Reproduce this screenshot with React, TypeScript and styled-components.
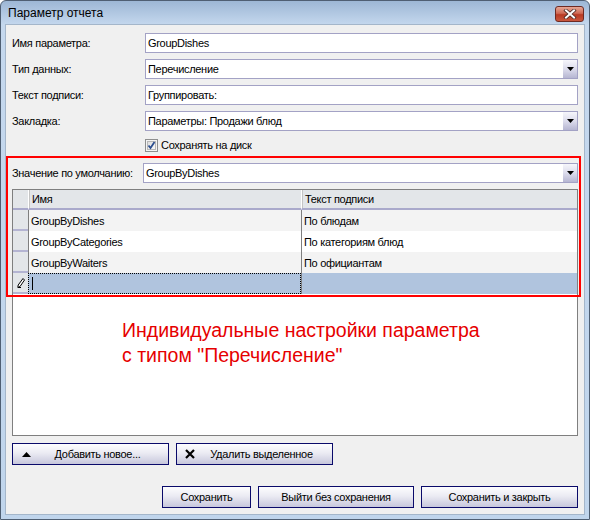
import React from 'react';
import styled, {createGlobalStyle} from 'styled-components';

const GlobalStyle = createGlobalStyle`
    body {
        margin: 0;
        font-family: "Liberation Sans", Arial, sans-serif;
        font-size: 11px;
        letter-spacing: -0.3px;
        color: #000;
    }
`

const rows = [
    {name: 'GroupByDishes', caption: 'По блюдам', bg: '#f3f3f3'},
    {name: 'GroupByCategories', caption: 'По категориям блюд', bg: '#ffffff'},
    {name: 'GroupByWaiters', caption: 'По официантам', bg: '#f3f3f3'},
];

const Arrow = () => (
    <ArrowButton>
        <svg width="7" height="4" viewBox="0 0 7 4">
            <path d="M0 0H7L3.5 4Z" fill="#000"/>
        </svg>
    </ArrowButton>
);

export default function App() {
    return (
        <>
            <GlobalStyle/>
            <Window>
                <TitleBar>
                    <Title>Параметр отчета</Title>
                    <CloseButton>
                        <svg width="14" height="10" viewBox="0 0 14 10">
                            <path d="M3 1.5L11 8.5M11 1.5L3 8.5" stroke="#4a2a26" strokeWidth="3.6"
                                  strokeLinecap="square"/>
                            <path d="M3 1.5L11 8.5M11 1.5L3 8.5" stroke="#fff" strokeWidth="2"
                                  strokeLinecap="square"/>
                        </svg>
                    </CloseButton>
                </TitleBar>
                <Client>
                    <Form>
                        <Label>Имя параметра:</Label>
                        <Field>GroupDishes</Field>
                        <Label>Тип данных:</Label>
                        <Field>Перечисление<Arrow/></Field>
                        <Label>Текст подписи:</Label>
                        <Field>Группировать:</Field>
                        <Label>Закладка:</Label>
                        <Field>Параметры: Продажи блюд<Arrow/></Field>
                    </Form>
                    <CheckRow>
                        <svg width="13" height="13" viewBox="0 0 13 13">
                            <defs>
                                <linearGradient id="cb" x1="0" y1="0" x2="1" y2="1">
                                    <stop offset="0" stopColor="#dcdcdc"/>
                                    <stop offset="1" stopColor="#fbfbfb"/>
                                </linearGradient>
                            </defs>
                            <rect x="0.5" y="0.5" width="12" height="12" fill="#f4f4f4" stroke="#8e8f8f"/>
                            <rect x="2.5" y="2.5" width="8" height="8" fill="url(#cb)" stroke="#b8b8b8"/>
                            <path d="M3.5 6.5L5.5 9L9.5 3" fill="none" stroke="#2c4e8f" strokeWidth="1.8"/>
                        </svg>
                        <span>Сохранять на диск</span>
                    </CheckRow>
                    <DefaultRow>
                        <Label>Значение по умолчанию:</Label>
                        <Field>GroupByDishes<Arrow/></Field>
                    </DefaultRow>
                    <Grid>
                        <GridRow>
                            <HeaderCorner/>
                            <HeaderCell>Имя</HeaderCell>
                            <HeaderCell>Текст подписи</HeaderCell>
                        </GridRow>
                        {rows.map(r => (
                            <GridRow key={r.name}>
                                <RowHeader/>
                                <Cell $bg={r.bg}>{r.name}</Cell>
                                <Cell $bg={r.bg}>{r.caption}</Cell>
                            </GridRow>
                        ))}
                        <GridRow>
                            <RowHeader>
                                <svg width="8" height="10" viewBox="0 0 8 10">
                                    <path d="M6 0.5L7.5 2L3 8.5L0.8 9.5L1.2 7Z" fill="#fff" stroke="#000"
                                          strokeWidth="1"/>
                                    <path d="M1 9.5H4" stroke="#000" strokeWidth="1"/>
                                </svg>
                            </RowHeader>
                            <EditCell $bg="#b0c4de"><Caret/></EditCell>
                            <Cell $bg="#b0c4de"/>
                        </GridRow>
                        <Note>
                            Индивидуальные настройки параметра<br/>
                            с типом "Перечисление"
                        </Note>
                    </Grid>
                    <ActionRow>
                        <Button $wide>
                            <ButtonIcon>
                                <svg width="9" height="5" viewBox="0 0 9 5">
                                    <path d="M0 5H9L4.5 0Z" fill="#000"/>
                                </svg>
                            </ButtonIcon>
                            <ButtonText>Добавить новое...</ButtonText>
                        </Button>
                        <Button $wide>
                            <ButtonIcon>
                                <svg width="10" height="10" viewBox="0 0 10 10">
                                    <path d="M1 1L9 9M9 1L1 9" stroke="#000" strokeWidth="2.2"/>
                                </svg>
                            </ButtonIcon>
                            <ButtonText>Удалить выделенное</ButtonText>
                        </Button>
                    </ActionRow>
                    <Footer>
                        <Button style={{width: 89}}><ButtonText>Сохранить</ButtonText></Button>
                        <Button style={{width: 156}}><ButtonText>Выйти без сохранения</ButtonText></Button>
                        <Button style={{width: 157}}><ButtonText>Сохранить и закрыть</ButtonText></Button>
                    </Footer>
                    <Highlight/>
                </Client>
            </Window>
        </>
    );
}

const Window = styled.div`
    width: 590px;
    height: 520px;
    box-sizing: border-box;
    border: 1px solid #4f5f73;
    border-radius: 6px 6px 0 0;
    background: linear-gradient(#9db7d5, #c5d8ee 24px, #c0d5ec);
    padding: 0 4px 4px;
    display: flex;
    flex-direction: column;
`

const TitleBar = styled.div`
    height: 23px;
    display: flex;
    align-items: center;
    justify-content: space-between;
    padding: 0 1px 0 3px;
`

const Title = styled.div`
    font-size: 12px;
    letter-spacing: 0;
    color: #000;
    padding-top: 1px;
`

const CloseButton = styled.div`
    width: 29px;
    height: 16px;
    margin-top: 2px;
    box-sizing: border-box;
    border: 1px solid #6e2a22;
    border-radius: 3px;
    background: linear-gradient(#e6a795, #cf6a55 45%, #b83a24 55%, #c9573d);
    display: flex;
    align-items: center;
    justify-content: center;
`

const Client = styled.div`
    position: relative;
    flex: 1;
    border: 1px solid #a4b6ca;
    background: #f0f0f0;
    padding: 8px 6px 0 6px;
    display: flex;
    flex-direction: column;
`

const Form = styled.div`
    display: grid;
    grid-template-columns: 133px 1fr;
    grid-auto-rows: 20px;
    row-gap: 6px;
    align-items: center;
`

const Label = styled.div`
    white-space: nowrap;
`

const Field = styled.div`
    position: relative;
    height: 20px;
    box-sizing: border-box;
    border: 1px solid #a3a2c5;
    background: #fff;
    padding-left: 2px;
    display: flex;
    align-items: center;
    white-space: nowrap;
`

const ArrowButton = styled.div`
    position: absolute;
    top: 0;
    right: 0;
    bottom: 0;
    width: 14px;
    background: linear-gradient(#f6f6fb, #dcdcec 50%, #b6b6d2);
    display: flex;
    align-items: center;
    justify-content: center;
`

const CheckRow = styled.div`
    margin: 7px 0 0 133px;
    height: 14px;
    display: flex;
    align-items: center;
    gap: 3px;
`

const DefaultRow = styled.div`
    margin-top: 11px;
    display: grid;
    grid-template-columns: 131px 1fr;
    align-items: center;
`

const Grid = styled.div`
    margin-top: 6px;
    height: 247px;
    box-sizing: border-box;
    border: 1px solid #7f7f7f;
    background: #fff;
    display: flex;
    flex-direction: column;
`

const GridRow = styled.div`
    display: grid;
    grid-template-columns: 15px 273px 1fr;
`

const HeaderCorner = styled.div`
    height: 18px;
    background: #e3e6e9;
    border-bottom: 2px solid #a9a9cb;
`

const HeaderCell = styled.div`
    height: 18px;
    background: #e3e6e9;
    border-bottom: 2px solid #a9a9cb;
    border-left: 1px solid #ffffff;
    box-shadow: inset 1px 0 0 #c4c4c4;
    padding-left: 3px;
    display: flex;
    align-items: center;
`

const RowHeader = styled.div`
    height: 19px;
    background: #e3e6e9;
    border-bottom: 2px solid #b4b4d2;
    display: flex;
    align-items: center;
    justify-content: center;
`

const Cell = styled.div<{ $bg: string }>`
    height: 21px;
    box-sizing: border-box;
    background: ${p => p.$bg};
    border-left: 1px solid #7f7f7f;
    padding-left: 2px;
    display: flex;
    align-items: center;
    white-space: nowrap;
`

const EditCell = styled(Cell)`
    border: 1px dotted #000;
    padding-left: 3px;
`

const Caret = styled.div`
    width: 1px;
    height: 13px;
    background: #000;
`

const Note = styled.div`
    padding: 24px 0 0 109px;
    font-size: 19.5px;
    letter-spacing: 0;
    line-height: 25px;
    color: #e60000;
`

const ActionRow = styled.div`
    margin-top: 7px;
    display: flex;
    gap: 7px;
`

const Footer = styled.div`
    margin-top: 21px;
    display: flex;
    justify-content: flex-end;
    gap: 7px;
`

const Button = styled.div<{ $wide?: boolean }>`
    width: ${p => (p.$wide ? '157px' : 'auto')};
    height: 22px;
    box-sizing: border-box;
    border: 1px solid #0a0a6a;
    background: linear-gradient(#fdfdfe, #ebebf3 45%, #c7c7dc);
    display: flex;
    align-items: center;
    padding: 0 6px;
`

const ButtonIcon = styled.div`
    width: 14px;
    display: flex;
    justify-content: center;
`

const ButtonText = styled.div`
    flex: 1;
    text-align: center;
    white-space: nowrap;
`

const Highlight = styled.div`
    position: absolute;
    left: 0;
    top: 131px;
    width: 575px;
    height: 141px;
    box-sizing: border-box;
    border: 2px solid #ff0000;
    pointer-events: none;
`
